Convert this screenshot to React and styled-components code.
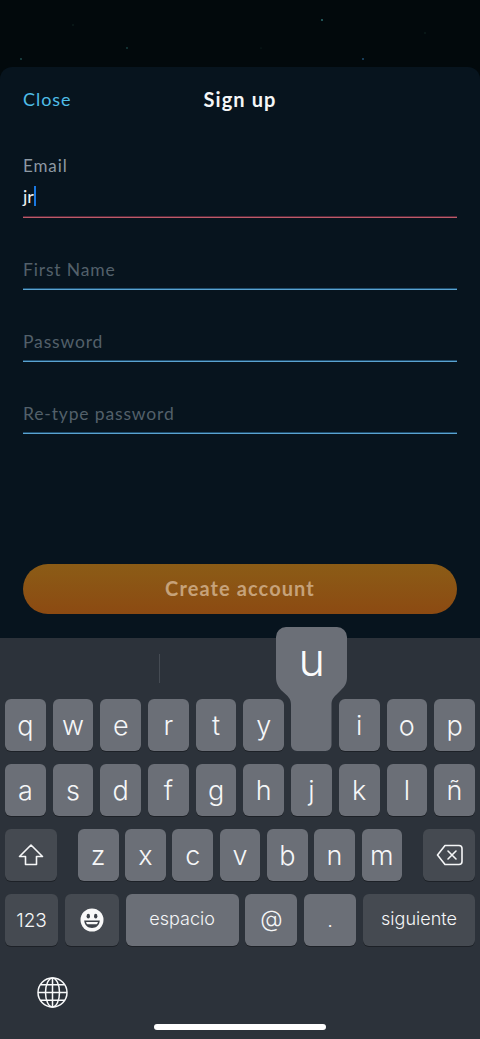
import React from "react";
import styled, { createGlobalStyle } from "styled-components";

const GlobalStyle = createGlobalStyle`
  html, body {
    margin: 0;
    padding: 0;
    background: #02090c;
  }
`;

const Screen = styled.div`
  width: 480px;
  height: 1039px;
  display: flex;
  flex-direction: column;
  overflow: hidden;
  background: #02090c;
`;

const Sky = styled.svg`
  display: block;
  width: 480px;
  height: 67px;
  flex: none;
`;

const Sheet = styled.div`
  flex: 1;
  display: flex;
  flex-direction: column;
  padding: 0 23px;
  background: #07141e;
  border-radius: 12px 12px 0 0;
  font-family: Lato, "Open Sans", sans-serif;
`;

const Header = styled.div`
  height: 63px;
  display: grid;
  grid-template-columns: 1fr auto 1fr;
  align-items: center;
`;

const CloseLink = styled.span`
  font-size: 18px;
  letter-spacing: 0.95px;
  color: #4fbde8;
`;

const Title = styled.span`
  font-size: 20px;
  font-weight: 700;
  letter-spacing: 1.1px;
  color: #f4f6f7;
`;

const Form = styled.div`
  display: flex;
  flex-direction: column;
  gap: 19px;
  margin-top: 24px;
`;

const Field = styled.div`
  height: 52px;
  display: flex;
  flex-direction: column;
  justify-content: flex-end;
  border-bottom: 1px solid ${(p) => (p.$error ? "#bd5a68" : "#5aa3d0")};
  box-shadow: inset 0 -1px 0 ${(p) => (p.$error ? "#55283a" : "#1e4d6e")};
`;

const FilledField = styled(Field)`
  height: 63px;
  justify-content: flex-start;
`;

const Label = styled.span`
  font-size: 17px;
  line-height: 24px;
  letter-spacing: 0.9px;
  color: #8d99a3;
`;

const Placeholder = styled.span`
  font-size: 17.5px;
  line-height: 24px;
  margin-bottom: 7px;
  letter-spacing: 0.85px;
  color: #53606a;
`;

const Value = styled.div`
  display: flex;
  align-items: center;
  height: 22px;
  margin-top: 7px;
  font-size: 18px;
  color: #eef1f3;
`;

const Caret = styled.span`
  width: 2px;
  height: 20px;
  background: #1a78e0;
`;

const SubmitButton = styled.button`
  height: 50px;
  margin-top: auto;
  margin-bottom: 24px;
  padding: 0 0 2px;
  border: none;
  border-radius: 25px;
  background: linear-gradient(180deg, #8b5c16 0%, #8c4a12 100%);
  font-family: Lato, "Open Sans", sans-serif;
  font-size: 20px;
  font-weight: 700;
  letter-spacing: 1.1px;
  color: #c6a27a;
`;

const Keyboard = styled.div`
  height: 401px;
  flex: none;
  display: flex;
  flex-direction: column;
  background: #2c323a;
  font-family: Inter, sans-serif;
`;

const Suggestions = styled.div`
  height: 61px;
  flex: none;
  display: flex;
  align-items: center;
  padding-left: 159px;
`;

const Divider = styled.span`
  width: 1px;
  height: 29px;
  background: #454b53;
`;

const Rows = styled.div`
  display: flex;
  flex-direction: column;
  gap: 13px;
  padding: 0 5px;
`;

const Row = styled.div`
  display: flex;
  justify-content: space-between;
  height: 52px;
`;

const Letters = styled.div`
  display: flex;
  gap: 6.6px;
`;

const Key = styled.div`
  position: relative;
  flex: none;
  width: ${(p) => p.$w || 40.7}px;
  height: 52px;
  display: flex;
  align-items: center;
  justify-content: center;
  border-radius: 6px;
  background: ${(p) => (p.$fn ? "#454a51" : "#6b6f77")};
  box-shadow: 0 1px 0 #1d2127;
  font-size: ${(p) => p.$size || 27}px;
  font-weight: 300;
  color: #f5f6f7;
`;

const WordKey = styled(Key)`
  padding-bottom: 3px;
  box-sizing: border-box;
`;

const PressedKey = styled(Key)`
  background: transparent;
  box-shadow: none;
`;

const Popup = styled.div`
  position: absolute;
  left: -15px;
  bottom: 0;
  width: 71px;
  height: 124px;
`;

const PopupShape = styled.svg`
  display: block;
  width: 71px;
  height: 124px;
`;

const PopupLetter = styled.span`
  position: absolute;
  top: 8px;
  left: 0;
  right: 0;
  text-align: center;
  font-size: 45px;
  line-height: 50px;
  font-weight: 300;
  color: #fbfbfc;
`;

const KeyboardFooter = styled.div`
  flex: 1;
  display: flex;
  flex-direction: column;
  padding: 31px 0 9px 37px;
`;

const Home = styled.div`
  width: 172px;
  height: 6px;
  margin: auto 0 0 117px;
  border-radius: 3px;
  background: #fff;
`;

const Icon = styled.svg`
  display: block;
  flex: none;
`;

const stars = [
  [322, 20, 1.1, "#2a6668"],
  [73, 25, 0.7, "#16302c"],
  [127, 48, 0.9, "#1b4445"],
  [21, 59, 0.9, "#215352"],
  [363, 59, 1, "#1f4e72"],
  [425, 33, 0.7, "#16302c"],
  [261, 48, 0.6, "#162e2a"],
];

const ShiftIcon = () => (
  <Icon width="26" height="24" viewBox="0 0 26 24" fill="none" stroke="#f5f6f7" strokeWidth="1.6" strokeLinejoin="round">
    <path d="M13 2 L24.5 13.5 H18.5 V21.5 H7.5 V13.5 H1.5 Z" />
  </Icon>
);

const DeleteIcon = () => (
  <Icon width="27" height="22" viewBox="0 0 27 22" fill="none" stroke="#f5f6f7" strokeWidth="1.6" strokeLinejoin="round" strokeLinecap="round">
    <path d="M9 1.5 H23 a3 3 0 0 1 3 3 V17.5 a3 3 0 0 1 -3 3 H9 L1.5 11 Z" />
    <path d="M12 7 L20 15 M20 7 L12 15" />
  </Icon>
);

const EmojiIcon = () => (
  <Icon width="24" height="24" viewBox="0 0 24 24">
    <circle cx="12" cy="12" r="11.5" fill="#f8f8f8" />
    <ellipse cx="8.3" cy="8.2" rx="1.7" ry="2.4" fill="#3d4249" />
    <ellipse cx="15.7" cy="8.2" rx="1.7" ry="2.4" fill="#3d4249" />
    <path d="M4.2 12.6 H19.8 C19.4 17.6 16.2 20 12 20 C7.8 20 4.6 17.6 4.2 12.6 Z" fill="#3d4249" />
    <path d="M6 14 H18 C17.6 15.2 17.2 15.8 16.6 16.3 H7.4 C6.8 15.8 6.4 15.2 6 14 Z" fill="#f8f8f8" />
  </Icon>
);

const GlobeIcon = () => (
  <Icon width="31" height="31" viewBox="0 0 31 31" fill="none" stroke="#f8f9fa" strokeWidth="1.5">
    <circle cx="15.5" cy="15.5" r="14.5" />
    <ellipse cx="15.5" cy="15.5" rx="7" ry="14.5" />
    <path d="M15.5 1 V30 M1 15.5 H30 M3.4 7.8 H27.6 M3.4 23.2 H27.6" />
  </Icon>
);

export default function App() {
  return (
    <Screen>
      <GlobalStyle />
      <Sky viewBox="0 0 480 67">
        {stars.map(([x, y, r, fill]) => (
          <circle key={`${x}-${y}`} cx={x} cy={y} r={r} fill={fill} />
        ))}
      </Sky>
      <Sheet>
        <Header>
          <CloseLink>Close</CloseLink>
          <Title>Sign up</Title>
        </Header>
        <Form>
          <FilledField $error>
            <Label>Email</Label>
            <Value>
              jr
              <Caret />
            </Value>
          </FilledField>
          <Field>
            <Placeholder>First Name</Placeholder>
          </Field>
          <Field>
            <Placeholder>Password</Placeholder>
          </Field>
          <Field>
            <Placeholder>Re-type password</Placeholder>
          </Field>
        </Form>
        <SubmitButton>Create account</SubmitButton>
      </Sheet>
      <Keyboard>
        <Suggestions>
          <Divider />
        </Suggestions>
        <Rows>
          <Row>
            {["q", "w", "e", "r", "t", "y"].map((k) => (
              <Key key={k}>{k}</Key>
            ))}
            <PressedKey>
              <Popup>
                <PopupShape viewBox="0 0 71 124">
                  <path
                    d="M10 0 H61 a10 10 0 0 1 10 10 V50 c0 6 -2 9 -6 13 L60 68 c-3 3 -4.5 5 -4.5 10 V118 a6 6 0 0 1 -6 6 H21 a6 6 0 0 1 -6 -6 V78 c0 -5 -1.5 -7 -4.5 -10 L5 63 c-3 -4 -5 -7 -5 -13 V10 a10 10 0 0 1 10 -10 Z"
                    fill="#6b6f77"
                  />
                </PopupShape>
                <PopupLetter>u</PopupLetter>
              </Popup>
            </PressedKey>
            {["i", "o", "p"].map((k) => (
              <Key key={k}>{k}</Key>
            ))}
          </Row>
          <Row>
            {["a", "s", "d", "f", "g", "h", "j", "k", "l", "ñ"].map((k) => (
              <Key key={k}>{k}</Key>
            ))}
          </Row>
          <Row>
            <Key $fn $w={52}>
              <ShiftIcon />
            </Key>
            <Letters>
              {["z", "x", "c", "v", "b", "n", "m"].map((k) => (
                <Key key={k}>{k}</Key>
              ))}
            </Letters>
            <Key $fn $w={52}>
              <DeleteIcon />
            </Key>
          </Row>
          <Row>
            <Key $fn $w={53} $size={19}>123</Key>
            <Key $fn $w={54}>
              <EmojiIcon />
            </Key>
            <WordKey $w={113} $size={18}>espacio</WordKey>
            <WordKey $w={52} $size={23}>@</WordKey>
            <Key $w={52} $size={20}>.</Key>
            <WordKey $fn $w={112} $size={18}>siguiente</WordKey>
          </Row>
        </Rows>
        <KeyboardFooter>
          <GlobeIcon />
          <Home />
        </KeyboardFooter>
      </Keyboard>
    </Screen>
  );
}
